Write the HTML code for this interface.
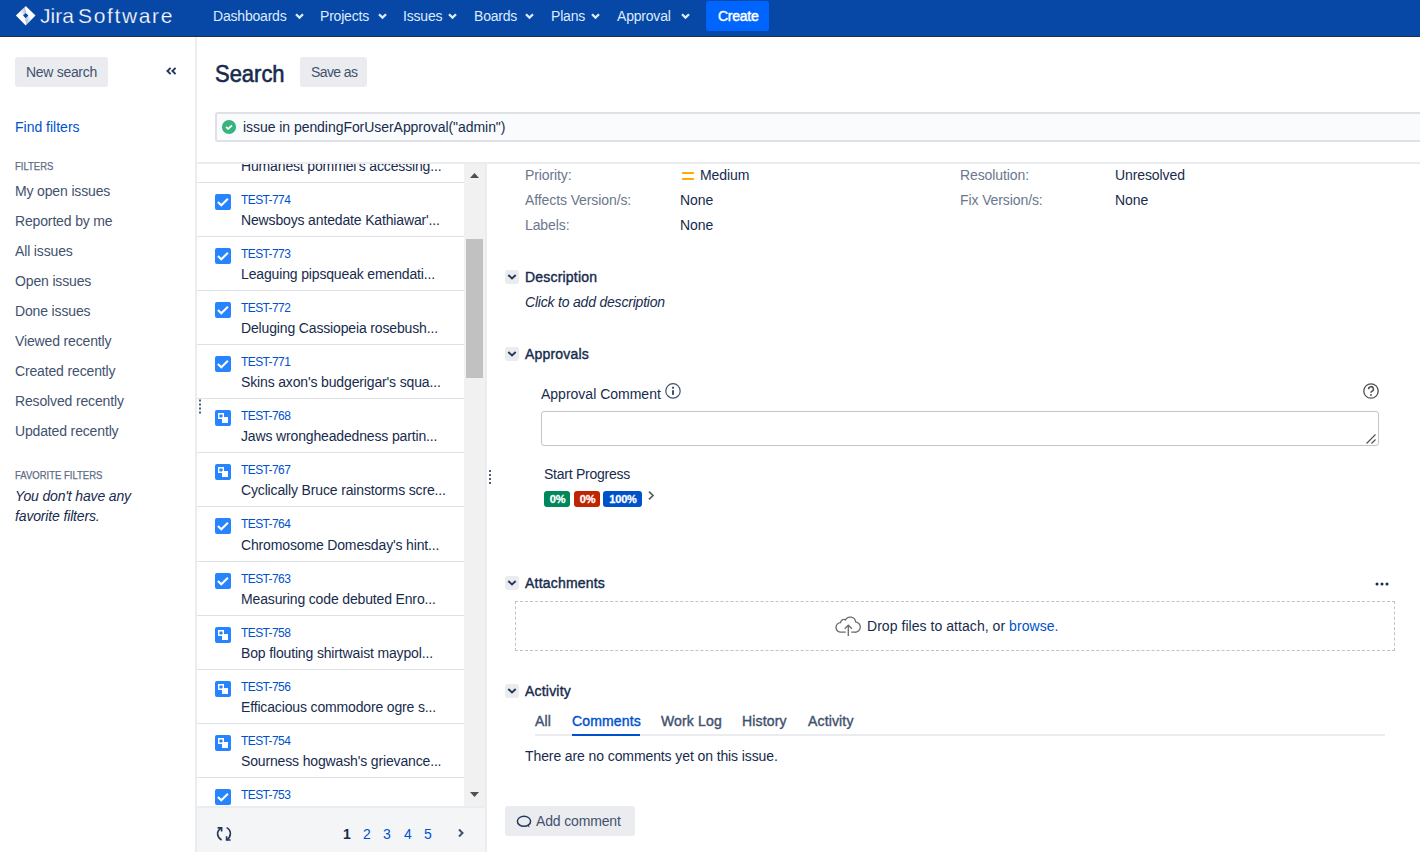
<!DOCTYPE html>
<html><head><meta charset="utf-8">
<style>
*{box-sizing:border-box;margin:0;padding:0}
html,body{width:1420px;height:852px;overflow:hidden;background:#fff}
body{position:relative;font-family:"Liberation Sans",sans-serif;color:#172b4d;font-size:14px}
.a{position:absolute}
.t{position:absolute;white-space:nowrap;line-height:1}
/* header */
#hdr{position:absolute;left:0;top:0;width:1420px;height:37px;background:#0747a6;border-bottom:1px solid #233044}
.nav{color:#deebff;font-size:14px;top:9px;letter-spacing:-0.2px}
.chev{position:absolute;top:12px;width:9px;height:8px}
.btn{position:absolute;background:#ebecf0;border-radius:3px}
.lnk{color:#0052cc}
.side{color:#42526e;font-size:14px;letter-spacing:-0.15px}
.sub{font-size:11px;color:#5e6c84;letter-spacing:0px;-webkit-text-stroke:0.25px #5e6c84;transform:scaleX(0.865);transform-origin:0 0}
.row{position:absolute;left:197px;width:267px;height:1px;background:#dfe1e6}
.key{font-size:12px;color:#0052cc;letter-spacing:-0.6px}
.sum{font-size:14px;color:#172b4d;letter-spacing:-0.15px}
.ico{position:absolute;left:215px;width:16px;height:16px}
.lbl{color:#6b778c;font-size:14px;letter-spacing:-0.1px}
.val{color:#172b4d;font-size:14px;letter-spacing:-0.1px}
.tog{position:absolute;left:505px;width:14px;height:14px;background:#ebecf0;border-radius:3px}
.h{font-weight:normal;font-size:14px;color:#172b4d;letter-spacing:0.2px;-webkit-text-stroke:0.4px #172b4d}
.bdg{top:491px;height:16px;border-radius:3px;color:#fff;font-size:11px;font-weight:bold;line-height:16px;text-align:center;letter-spacing:-0.2px;padding-left:1px;-webkit-text-stroke:0.3px #fff}
.tab{font-weight:normal;font-size:14px;color:#42526e;letter-spacing:0.15px;-webkit-text-stroke:0.4px currentColor}
</style></head>
<body>
<div id="hdr">
  <svg class="a" style="left:15px;top:5px" width="22" height="22" viewBox="0 0 22 22">
    <defs>
      <linearGradient id="g1" x1="1" y1="0.3" x2="0" y2="0.7"><stop offset="0" stop-color="#0747a6" stop-opacity="0.42"/><stop offset="1" stop-color="#0747a6" stop-opacity="0"/></linearGradient>
      <linearGradient id="g2" x1="0" y1="0.7" x2="1" y2="0.3"><stop offset="0" stop-color="#0747a6" stop-opacity="0.42"/><stop offset="1" stop-color="#0747a6" stop-opacity="0"/></linearGradient>
    </defs>
    <path d="M10.7 1 L20.5 10.6 L10.7 20.4 L0.9 10.6 Z" fill="#fff"/>
    <path d="M10.7 7.9 L13.4 10.6 L10.7 13.3 L8 10.6 Z" fill="#0747a6"/>
    <path d="M10.7 1 Q9.6 3.6 10.9 6 Q12 7.3 10.7 7.9 L8 10.6 L5.6 8.2 L5.3 6.4 Z" fill="url(#g1)"/>
    <path d="M10.7 20.4 Q11.8 17.8 10.5 15.4 Q9.4 14.1 10.7 13.3 L13.4 10.6 L15.8 13 L16.1 14.8 Z" fill="url(#g2)"/>
  </svg>
  <div class="t" style="left:40px;top:5px;font-size:21px;color:#fff;-webkit-text-stroke:0.25px #0747a6">Jira</div><div class="t" style="left:78px;top:5px;font-size:21px;color:#fff;letter-spacing:1.65px;-webkit-text-stroke:0.25px #0747a6">Software</div>
  <div class="t nav" style="left:213px">Dashboards</div>
  <svg class="chev" style="left:295px" viewBox="0 0 9 7"><path d="M1 1.7 L4.5 5.1 L8 1.7" stroke="#deebff" stroke-width="2.3" fill="none"/></svg>
  <div class="t nav" style="left:320px">Projects</div>
  <svg class="chev" style="left:378px" viewBox="0 0 9 7"><path d="M1 1.7 L4.5 5.1 L8 1.7" stroke="#deebff" stroke-width="2.3" fill="none"/></svg>
  <div class="t nav" style="left:403px">Issues</div>
  <svg class="chev" style="left:448px" viewBox="0 0 9 7"><path d="M1 1.7 L4.5 5.1 L8 1.7" stroke="#deebff" stroke-width="2.3" fill="none"/></svg>
  <div class="t nav" style="left:474px">Boards</div>
  <svg class="chev" style="left:525px" viewBox="0 0 9 7"><path d="M1 1.7 L4.5 5.1 L8 1.7" stroke="#deebff" stroke-width="2.3" fill="none"/></svg>
  <div class="t nav" style="left:551px">Plans</div>
  <svg class="chev" style="left:591px" viewBox="0 0 9 7"><path d="M1 1.7 L4.5 5.1 L8 1.7" stroke="#deebff" stroke-width="2.3" fill="none"/></svg>
  <div class="t nav" style="left:617px">Approval</div>
  <svg class="chev" style="left:681px" viewBox="0 0 9 7"><path d="M1 1.7 L4.5 5.1 L8 1.7" stroke="#deebff" stroke-width="2.3" fill="none"/></svg>
  <div class="a" style="left:706px;top:1px;width:63px;height:30px;background:#0065ff;border-radius:3px"></div>
  <div class="t" style="left:718px;top:9px;color:#fff;font-weight:normal;letter-spacing:-0.25px;-webkit-text-stroke:0.45px #fff">Create</div>
</div>

<!-- sidebar -->
<div class="a" style="left:195px;top:37px;width:2px;height:815px;background:#ebecf0"></div>
<div class="btn" style="left:15px;top:57px;width:93px;height:30px"></div>
<div class="t side" style="left:26px;top:65px;letter-spacing:-0.3px">New search</div>
<svg class="a" style="left:165px;top:66px" width="12" height="10" viewBox="0 0 12 10"><path d="M5.6 1.9 L2.4 5 L5.6 8.1 M10.6 1.9 L7.4 5 L10.6 8.1" stroke="#253858" stroke-width="1.9" fill="none"/></svg>
<div class="t lnk" style="left:15px;top:120px">Find filters</div>
<div class="t sub" style="left:15px;top:161px">FILTERS</div>
<div class="t side" style="left:15px;top:184px">My open issues</div>
<div class="t side" style="left:15px;top:214px">Reported by me</div>
<div class="t side" style="left:15px;top:244px">All issues</div>
<div class="t side" style="left:15px;top:274px">Open issues</div>
<div class="t side" style="left:15px;top:304px">Done issues</div>
<div class="t side" style="left:15px;top:334px">Viewed recently</div>
<div class="t side" style="left:15px;top:364px">Created recently</div>
<div class="t side" style="left:15px;top:394px">Resolved recently</div>
<div class="t side" style="left:15px;top:424px">Updated recently</div>
<div class="t sub" style="left:15px;top:470px">FAVORITE FILTERS</div>
<div class="t side" style="left:15px;top:489px;font-style:italic;color:#172b4d">You don't have any</div>
<div class="t side" style="left:15px;top:509px;font-style:italic;color:#172b4d">favorite filters.</div>

<!-- main header -->
<div class="t" style="left:215px;top:62px;font-size:24px;color:#172b4d;letter-spacing:0px;transform:scaleX(0.915);transform-origin:0 0;-webkit-text-stroke:0.6px #172b4d">Search</div>
<div class="btn" style="left:300px;top:57px;width:67px;height:30px"></div>
<div class="t side" style="left:311px;top:65px;letter-spacing:-0.6px">Save as</div>
<div class="a" style="left:215px;top:112px;width:1220px;height:30px;background:#fafbfc;border:2px solid #dfe1e6;border-radius:3px"></div>
<svg class="a" style="left:221px;top:119px" width="16" height="16" viewBox="0 0 16 16"><circle cx="8" cy="8" r="7.1" fill="#36b37e"/><path d="M5 8 L7.2 9.9 L11 6.3" stroke="#fff" stroke-width="1.8" fill="none"/></svg>
<div class="t" style="left:243px;top:120px;color:#172b4d;letter-spacing:-0.05px">issue in pendingForUserApproval("admin")</div>

<!-- separator -->
<div class="a" style="left:197px;top:162px;width:1223px;height:2px;background:#ebecf0"></div>
<!-- issue list -->
<div class="a" style="left:197px;top:164px;width:288px;height:642px;overflow:hidden">
<div class="t sum" style="left:44px;top:-5px">Humanest pommel's accessing...</div>
<div class="row" style="top:18px;left:0"></div>
<div class="row" style="top:72px;left:0"></div>
<div class="row" style="top:126px;left:0"></div>
<div class="row" style="top:180px;left:0"></div>
<div class="row" style="top:234px;left:0"></div>
<div class="row" style="top:288px;left:0"></div>
<div class="row" style="top:342px;left:0"></div>
<div class="row" style="top:397px;left:0"></div>
<div class="row" style="top:451px;left:0"></div>
<div class="row" style="top:505px;left:0"></div>
<div class="row" style="top:559px;left:0"></div>
<div class="row" style="top:613px;left:0"></div>
<svg class="ico" style="left:18px;top:30px" viewBox="0 0 16 16"><rect width="16" height="16" rx="2" fill="#2684ff"/><path d="M2.9 8 L6.3 11.3 L12.9 4.8" stroke="#fff" stroke-width="2.1" fill="none"/></svg>
<div class="t key" style="left:44px;top:30px">TEST-774</div>
<div class="t sum" style="left:44px;top:49px">Newsboys antedate Kathiawar'...</div>
<svg class="ico" style="left:18px;top:84px" viewBox="0 0 16 16"><rect width="16" height="16" rx="2" fill="#2684ff"/><path d="M2.9 8 L6.3 11.3 L12.9 4.8" stroke="#fff" stroke-width="2.1" fill="none"/></svg>
<div class="t key" style="left:44px;top:84px">TEST-773</div>
<div class="t sum" style="left:44px;top:103px">Leaguing pipsqueak emendati...</div>
<svg class="ico" style="left:18px;top:138px" viewBox="0 0 16 16"><rect width="16" height="16" rx="2" fill="#2684ff"/><path d="M2.9 8 L6.3 11.3 L12.9 4.8" stroke="#fff" stroke-width="2.1" fill="none"/></svg>
<div class="t key" style="left:44px;top:138px">TEST-772</div>
<div class="t sum" style="left:44px;top:157px">Deluging Cassiopeia rosebush...</div>
<svg class="ico" style="left:18px;top:192px" viewBox="0 0 16 16"><rect width="16" height="16" rx="2" fill="#2684ff"/><path d="M2.9 8 L6.3 11.3 L12.9 4.8" stroke="#fff" stroke-width="2.1" fill="none"/></svg>
<div class="t key" style="left:44px;top:192px">TEST-771</div>
<div class="t sum" style="left:44px;top:211px">Skins axon's budgerigar's squa...</div>
<svg class="ico" style="left:18px;top:246px" viewBox="0 0 16 16"><rect width="16" height="16" rx="2" fill="#2684ff"/><rect x="3" y="3" width="6" height="6" fill="#fff"/><rect x="4.4" y="4.4" width="3.2" height="3.2" rx="0.6" fill="#2684ff"/><rect x="7" y="7" width="6" height="6" fill="#fff"/></svg>
<div class="t key" style="left:44px;top:246px">TEST-768</div>
<div class="t sum" style="left:44px;top:265px">Jaws wrongheadedness partin...</div>
<svg class="ico" style="left:18px;top:300px" viewBox="0 0 16 16"><rect width="16" height="16" rx="2" fill="#2684ff"/><rect x="3" y="3" width="6" height="6" fill="#fff"/><rect x="4.4" y="4.4" width="3.2" height="3.2" rx="0.6" fill="#2684ff"/><rect x="7" y="7" width="6" height="6" fill="#fff"/></svg>
<div class="t key" style="left:44px;top:300px">TEST-767</div>
<div class="t sum" style="left:44px;top:319px">Cyclically Bruce rainstorms scre...</div>
<svg class="ico" style="left:18px;top:354px" viewBox="0 0 16 16"><rect width="16" height="16" rx="2" fill="#2684ff"/><path d="M2.9 8 L6.3 11.3 L12.9 4.8" stroke="#fff" stroke-width="2.1" fill="none"/></svg>
<div class="t key" style="left:44px;top:354px">TEST-764</div>
<div class="t sum" style="left:44px;top:374px">Chromosome Domesday's hint...</div>
<svg class="ico" style="left:18px;top:409px" viewBox="0 0 16 16"><rect width="16" height="16" rx="2" fill="#2684ff"/><path d="M2.9 8 L6.3 11.3 L12.9 4.8" stroke="#fff" stroke-width="2.1" fill="none"/></svg>
<div class="t key" style="left:44px;top:409px">TEST-763</div>
<div class="t sum" style="left:44px;top:428px">Measuring code debuted Enro...</div>
<svg class="ico" style="left:18px;top:463px" viewBox="0 0 16 16"><rect width="16" height="16" rx="2" fill="#2684ff"/><rect x="3" y="3" width="6" height="6" fill="#fff"/><rect x="4.4" y="4.4" width="3.2" height="3.2" rx="0.6" fill="#2684ff"/><rect x="7" y="7" width="6" height="6" fill="#fff"/></svg>
<div class="t key" style="left:44px;top:463px">TEST-758</div>
<div class="t sum" style="left:44px;top:482px">Bop flouting shirtwaist maypol...</div>
<svg class="ico" style="left:18px;top:517px" viewBox="0 0 16 16"><rect width="16" height="16" rx="2" fill="#2684ff"/><rect x="3" y="3" width="6" height="6" fill="#fff"/><rect x="4.4" y="4.4" width="3.2" height="3.2" rx="0.6" fill="#2684ff"/><rect x="7" y="7" width="6" height="6" fill="#fff"/></svg>
<div class="t key" style="left:44px;top:517px">TEST-756</div>
<div class="t sum" style="left:44px;top:536px">Efficacious commodore ogre s...</div>
<svg class="ico" style="left:18px;top:571px" viewBox="0 0 16 16"><rect width="16" height="16" rx="2" fill="#2684ff"/><rect x="3" y="3" width="6" height="6" fill="#fff"/><rect x="4.4" y="4.4" width="3.2" height="3.2" rx="0.6" fill="#2684ff"/><rect x="7" y="7" width="6" height="6" fill="#fff"/></svg>
<div class="t key" style="left:44px;top:571px">TEST-754</div>
<div class="t sum" style="left:44px;top:590px">Sourness hogwash's grievance...</div>
<svg class="ico" style="left:18px;top:625px" viewBox="0 0 16 16"><rect width="16" height="16" rx="2" fill="#2684ff"/><path d="M2.9 8 L6.3 11.3 L12.9 4.8" stroke="#fff" stroke-width="2.1" fill="none"/></svg>
<div class="t key" style="left:44px;top:625px">TEST-753</div>
</div>
<div class="a" style="left:464px;top:164px;width:21px;height:642px;background:#f1f1f1"></div>
<div class="a" style="left:466px;top:239px;width:17px;height:139px;background:#c1c1c1"></div>
<svg class="a" style="left:469px;top:172px" width="11" height="7" viewBox="0 0 11 7"><path d="M1 6 L5.5 1 L10 6 Z" fill="#505050"/></svg>
<svg class="a" style="left:469px;top:791px" width="11" height="7" viewBox="0 0 11 7"><path d="M1 1 L5.5 6 L10 1 Z" fill="#505050"/></svg>
<div class="a" style="left:485px;top:164px;width:2px;height:688px;background:#ebecf0"></div>
<div class="a" style="left:197px;top:806px;width:288px;height:46px;background:#f4f5f7;border-top:2px solid #ebecf0"></div>
<svg class="a" style="left:210px;top:820px" width="30" height="28" viewBox="0 0 30 28"><path d="M11.2 8.2 Q7.2 10.5 7.6 14.2 Q8 18 11.6 20" stroke="#253858" stroke-width="1.6" fill="none"/><path d="M7.6 7.8 H11.6 V11.6" stroke="#253858" stroke-width="1.7" fill="none"/><path d="M16.6 7.6 Q20.4 9.6 20.4 13.6 Q20.2 17.6 16.8 19.8" stroke="#253858" stroke-width="1.6" fill="none"/><path d="M16.6 16.2 V20 H20.6" stroke="#253858" stroke-width="1.7" fill="none"/></svg>
<div class="t" style="left:343px;top:827px;font-weight:bold;color:#172b4d">1</div>
<div class="t lnk" style="left:363px;top:827px">2</div>
<div class="t lnk" style="left:383px;top:827px">3</div>
<div class="t lnk" style="left:404px;top:827px">4</div>
<div class="t lnk" style="left:424px;top:827px">5</div>
<svg class="a" style="left:457px;top:828px" width="8" height="10" viewBox="0 0 8 10"><path d="M2 1.5 L5.5 5 L2 8.5" stroke="#42526e" stroke-width="2" fill="none"/></svg>
<!-- detail panel -->
<div class="t lbl" style="left:525px;top:168px">Priority:</div>
<svg class="a" style="left:681px;top:171px" width="14" height="10" viewBox="0 0 14 10"><rect x="1" y="1" width="12" height="2" rx="0.6" fill="#ffab00"/><rect x="1" y="7" width="12" height="2" rx="0.6" fill="#ffab00"/></svg>
<div class="t val" style="left:700px;top:168px">Medium</div>
<div class="t lbl" style="left:525px;top:193px">Affects Version/s:</div>
<div class="t val" style="left:680px;top:193px">None</div>
<div class="t lbl" style="left:525px;top:218px">Labels:</div>
<div class="t val" style="left:680px;top:218px">None</div>
<div class="t lbl" style="left:960px;top:168px">Resolution:</div>
<div class="t val" style="left:1115px;top:168px">Unresolved</div>
<div class="t lbl" style="left:960px;top:193px">Fix Version/s:</div>
<div class="t val" style="left:1115px;top:193px">None</div>

<div class="tog" style="top:270px"><svg width="14" height="14" viewBox="0 0 14 14"><path d="M3.3 5 L7 8.5 L10.7 5" stroke="#253858" stroke-width="1.9" fill="none"/></svg></div>
<div class="t h" style="left:525px;top:270px">Description</div>
<div class="t" style="left:525px;top:295px;font-style:italic;color:#172b4d;letter-spacing:-0.2px">Click to add description</div>

<div class="tog" style="top:347px"><svg width="14" height="14" viewBox="0 0 14 14"><path d="M3.3 5 L7 8.5 L10.7 5" stroke="#253858" stroke-width="1.9" fill="none"/></svg></div>
<div class="t h" style="left:525px;top:347px">Approvals</div>

<div class="t val" style="left:541px;top:387px;letter-spacing:0px">Approval Comment</div>
<svg class="a" style="left:665px;top:383px" width="16" height="16" viewBox="0 0 16 16"><circle cx="8" cy="7.9" r="7.2" stroke="#42526e" stroke-width="1.2" fill="none"/><rect x="7" y="3.8" width="2" height="1.9" fill="#42526e"/><rect x="7" y="7.2" width="2" height="4.7" fill="#42526e"/></svg>
<svg class="a" style="left:1363px;top:383px" width="16" height="16" viewBox="0 0 16 16"><circle cx="8" cy="8" r="7.2" stroke="#505050" stroke-width="1.3" fill="none"/><path d="M5.6 6.2 A2.4 2.4 0 1 1 8.8 8.3 Q8 8.7 8 9.8" stroke="#505050" stroke-width="1.5" fill="none"/><circle cx="8" cy="11.9" r="0.95" fill="#505050"/></svg>
<div class="a" style="left:541px;top:411px;width:838px;height:35px;border:1px solid #c4c4c4;border-radius:3px;background:#fff"></div>
<svg class="a" style="left:1365px;top:433px" width="12" height="12" viewBox="0 0 12 12"><path d="M1.5 10.5 L10.5 1.5 M6.5 10.5 L10.5 6.5" stroke="#505050" stroke-width="1.1" fill="none"/></svg>

<div class="t val" style="left:544px;top:467px;letter-spacing:-0.25px">Start Progress</div>
<div class="a bdg" style="left:544px;width:26px;background:#00875a">0%</div>
<div class="a bdg" style="left:574px;width:26px;background:#bf2600">0%</div>
<div class="a bdg" style="left:603px;width:39px;background:#0052cc">100%</div>
<svg class="a" style="left:647px;top:490px" width="9" height="11" viewBox="0 0 9 11"><path d="M2 1.6 L6 5.5 L2 9.4" stroke="#5a5a5a" stroke-width="1.7" fill="none"/></svg>

<div class="tog" style="top:576px"><svg width="14" height="14" viewBox="0 0 14 14"><path d="M3.3 5 L7 8.5 L10.7 5" stroke="#253858" stroke-width="1.9" fill="none"/></svg></div>
<div class="t h" style="left:525px;top:576px">Attachments</div>
<svg class="a" style="left:1374px;top:581px" width="16" height="6" viewBox="0 0 16 6"><circle cx="3" cy="3" r="1.5" fill="#172b4d"/><circle cx="8" cy="3" r="1.5" fill="#172b4d"/><circle cx="13" cy="3" r="1.5" fill="#172b4d"/></svg>
<div class="a" style="left:515px;top:601px;width:880px;height:50px;border:1px dashed #c2c2c2;border-radius:0"></div>
<svg class="a" style="left:835px;top:615px" width="26" height="22" viewBox="0 0 26 22"><path d="M10.7 17.2 H6 A4.7 4.7 0 0 1 5.6 7.6 A3.2 3.2 0 0 1 10.5 4.9 A5.4 5.4 0 0 1 20.6 6.9 A5 5 0 0 1 19.6 17.2 H16.3" stroke="#6b6b6b" stroke-width="1.3" fill="none"/><path d="M13.3 21 V10.4 M9.7 13.7 L13.3 10.2 L16.9 13.7" stroke="#6b6b6b" stroke-width="1.3" fill="none"/></svg>
<div class="t val" style="left:867px;top:619px;letter-spacing:0.05px">Drop files to attach, or <span class="lnk">browse.</span></div>

<div class="tog" style="top:684px"><svg width="14" height="14" viewBox="0 0 14 14"><path d="M3.3 5 L7 8.5 L10.7 5" stroke="#253858" stroke-width="1.9" fill="none"/></svg></div>
<div class="t h" style="left:525px;top:684px">Activity</div>
<div class="a" style="left:535px;top:734px;width:850px;height:2px;background:#ebecf0"></div>
<div class="t tab" style="left:535px;top:714px">All</div>
<div class="t tab" style="left:572px;top:714px;color:#0052cc">Comments</div>
<div class="a" style="left:572px;top:734px;width:68px;height:2px;background:#0052cc"></div>
<div class="t tab" style="left:661px;top:714px">Work Log</div>
<div class="t tab" style="left:742px;top:714px">History</div>
<div class="t tab" style="left:808px;top:714px">Activity</div>
<div class="t val" style="left:525px;top:749px">There are no comments yet on this issue.</div>

<div class="btn" style="left:505px;top:806px;width:130px;height:30px"></div>
<svg class="a" style="left:516px;top:815px" width="16" height="14" viewBox="0 0 16 14"><ellipse cx="8" cy="6.3" rx="6.6" ry="5" stroke="#253858" stroke-width="1.5" fill="none"/><path d="M11 10.6 L13.6 12.6 L12.6 9.6 Z" fill="#253858"/></svg>
<div class="t side" style="left:536px;top:814px">Add comment</div>

<!-- splitter dots -->
<svg class="a" style="left:488px;top:469px" width="4" height="16" viewBox="0 0 4 16"><rect x="1" y="1" width="2" height="2" fill="#505f79"/><rect x="1" y="5" width="2" height="2" fill="#505f79"/><rect x="1" y="9" width="2" height="2" fill="#505f79"/><rect x="1" y="13" width="2" height="2" fill="#505f79"/></svg>
<svg class="a" style="left:198px;top:399px" width="4" height="16" viewBox="0 0 4 16"><rect x="1" y="0.5" width="2" height="2" fill="#505f79"/><rect x="1" y="4.5" width="2" height="2" fill="#505f79"/><rect x="1" y="8.5" width="2" height="2" fill="#505f79"/><rect x="1" y="12.5" width="2" height="2" fill="#505f79"/></svg>

</body></html>
